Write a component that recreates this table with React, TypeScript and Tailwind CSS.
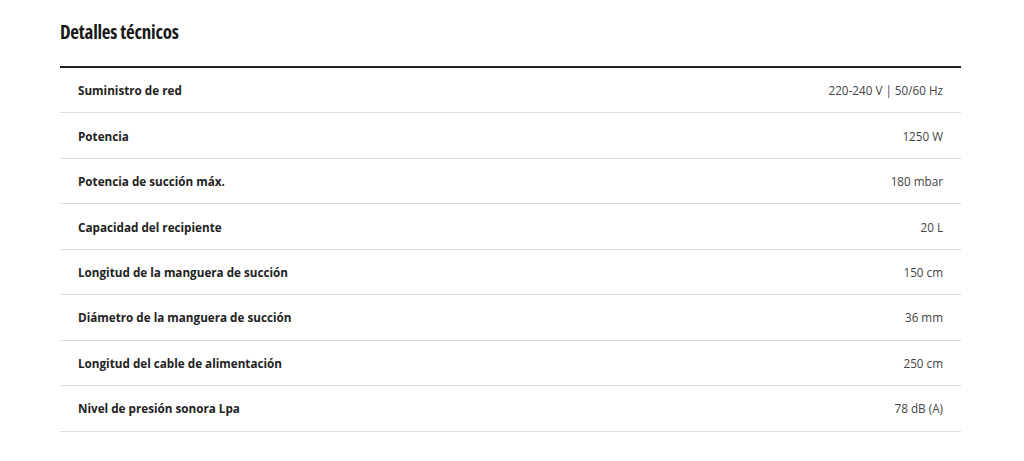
const specs: [string, string][] = [
  ['Suministro de red', '220-240 V | 50/60 Hz'],
  ['Potencia', '1250 W'],
  ['Potencia de succión máx.', '180 mbar'],
  ['Capacidad del recipiente', '20 L'],
  ['Longitud de la manguera de succión', '150 cm'],
  ['Diámetro de la manguera de succión', '36 mm'],
  ['Longitud del cable de alimentación', '250 cm'],
  ['Nivel de presión sonora Lpa', '78 dB (A)'],
]

export default function App() {
  return (
    <div className="w-[1024px] h-[461px] bg-white font-['Open_Sans',sans-serif] text-[#222]">
      <div className="w-[901px] ml-[60px] pt-[19px]">
        <h2 className="text-[19px] leading-[26px] font-bold tracking-[-0.25px] font-stretch-condensed text-[#1a1a1a]">
          Detalles técnicos
        </h2>
        <div className="mt-[21px] border-t-2 border-[#1f1f1f]">
          {specs.map(([label, value]) => (
            <div
              key={label}
              className="h-[45.45px] flex items-center justify-between px-[18px] border-b border-[#dcdcdc] text-[11.7px] leading-[16px]"
            >
              <span className="font-bold text-[#222]">{label}</span>
              <span className="text-[#444]">{value}</span>
            </div>
          ))}
        </div>
      </div>
    </div>
  )
}
